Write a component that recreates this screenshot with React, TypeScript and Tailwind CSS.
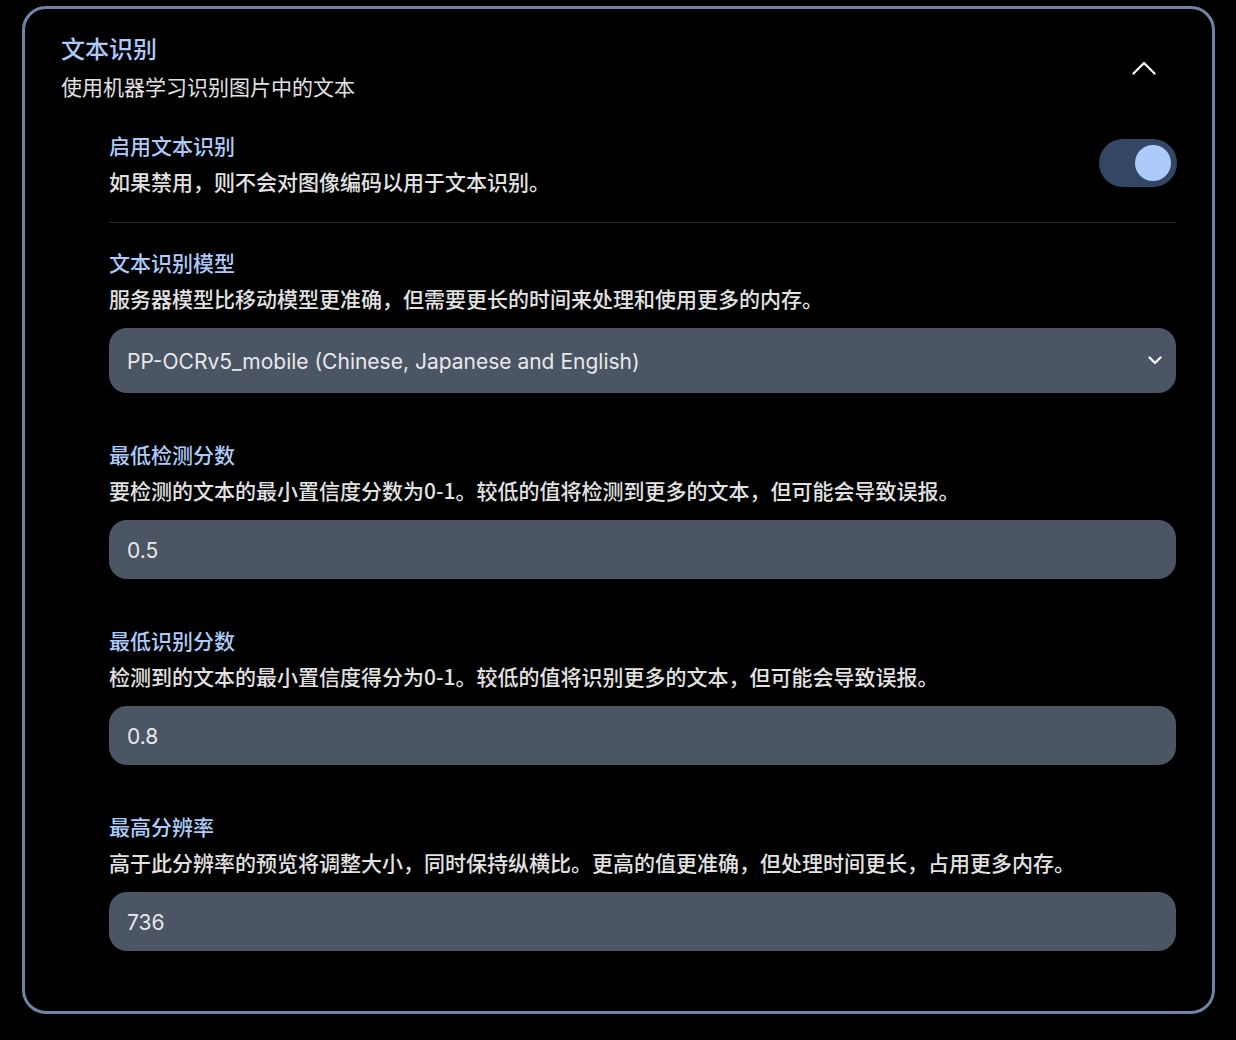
import React from "react";

const cjk = { fontFamily: '"Noto Sans CJK SC", "Noto Sans", sans-serif' };
const latin = { fontFamily: 'Inter, "Noto Sans CJK SC", sans-serif' };

function Field({ label, desc, children, className = "" }: { label: string; desc: string; children: React.ReactNode; className?: string }) {
  return (
    <div className={className}>
      <div className="text-[21px] leading-[31.5px] font-medium text-[#adcbfa]">{label}</div>
      <div className="mt-[5px] text-[21px] leading-[31.5px] font-medium text-[#e2e2e2]">{desc}</div>
      <div className="mt-[13px]">{children}</div>
    </div>
  );
}

function Input({ value }: { value: string }) {
  return (
    <div className="h-[59px] rounded-[18px] bg-[#4b5563] flex items-center px-[18px] pt-[3px] text-[21px] text-[#e8e9ec]" style={latin}>
      {value}
    </div>
  );
}

export default function App() {
  return (
    <div className="min-h-[1040px] bg-black pt-[6px] pl-[22px] pr-[21px]" style={cjk}>
      <div className="h-[1008px] rounded-[24px] border-[3px] border-[#6f83a6] px-[36px] pt-[21px]">
        <div className="flex items-center justify-between">
          <div>
            <div className="text-[24px] leading-[36px] font-medium text-[#adcbfa]">文本识别</div>
            <div className="mt-[5px] text-[21px] leading-[31.5px] text-[#e2e2e2]">使用机器学习识别图片中的文本</div>
          </div>
          <svg width="24" height="14" viewBox="0 0 24 14" className="mr-[20px] mt-[4px]" fill="none">
            <path d="M1.5 12.5 L12 2 L22.5 12.5" stroke="#ffffff" strokeWidth="2.2" strokeLinecap="round" strokeLinejoin="round" />
          </svg>
        </div>

        <div className="ml-[48px] mt-[27px]">
          <div className="flex items-center justify-between">
            <div>
              <div className="text-[21px] leading-[31.5px] font-medium text-[#adcbfa]">启用文本识别</div>
              <div className="mt-[5px] text-[21px] leading-[31.5px] font-medium text-[#e2e2e2]">如果禁用，则不会对图像编码以用于文本识别。</div>
            </div>
            <div className="w-[78px] h-[48px] rounded-full bg-[#334663] flex items-center justify-end pr-[6px] mr-[-1px] mt-[-2px]">
              <div className="w-[36px] h-[36px] rounded-full bg-[#adcbfa]" />
            </div>
          </div>
          <div className="mt-[24px] h-px bg-[#2a2a2a]" />

          <Field className="mt-[24px]" label="文本识别模型" desc="服务器模型比移动模型更准确，但需要更长的时间来处理和使用更多的内存。">
            <div className="h-[65px] rounded-[18px] bg-[#4b5563] flex items-center justify-between pl-[18px] pr-[14px] text-[21px] text-[#e8e9ec]" style={latin}>
              <span className="pt-[3px]">PP-OCRv5_mobile (Chinese, Japanese and English)</span>
              <svg width="14" height="9" viewBox="0 0 14 9" fill="none">
                <path d="M1.5 1.5 L7 7 L12.5 1.5" stroke="#ffffff" strokeWidth="2.2" strokeLinecap="round" strokeLinejoin="round" />
              </svg>
            </div>
          </Field>

          <Field className="mt-[46px]" label="最低检测分数" desc="要检测的文本的最小置信度分数为0-1。较低的值将检测到更多的文本，但可能会导致误报。">
            <Input value="0.5" />
          </Field>

          <Field className="mt-[46px]" label="最低识别分数" desc="检测到的文本的最小置信度得分为0-1。较低的值将识别更多的文本，但可能会导致误报。">
            <Input value="0.8" />
          </Field>

          <Field className="mt-[46px]" label="最高分辨率" desc="高于此分辨率的预览将调整大小，同时保持纵横比。更高的值更准确，但处理时间更长，占用更多内存。">
            <Input value="736" />
          </Field>
        </div>
      </div>
    </div>
  );
}
